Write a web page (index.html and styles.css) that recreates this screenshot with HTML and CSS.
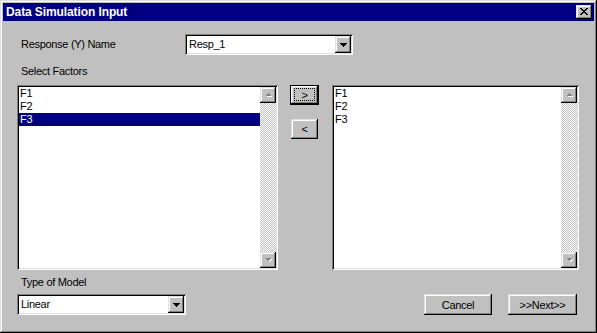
FILE: index.html
```html
<!DOCTYPE html>
<html>
<head>
<meta charset="utf-8">
<title>Data Simulation Input</title>
<link rel="stylesheet" href="styles.css">
</head>
<body>
<div class="window">
  <div class="titlebar">
    <span class="title">Data Simulation Input</span>
    <span class="close-btn"><svg width="8" height="7" viewBox="0 0 8 7" shape-rendering="crispEdges"><path d="M0 0h2v1H0zM6 0h2v1H6zM1 1h2v1H1zM5 1h2v1H5zM2 2h4v1H2zM3 3h2v1H3zM2 4h4v1H2zM1 5h2v1H1zM5 5h2v1H5zM0 6h2v1H0zM6 6h2v1H6z"/></svg></span>
  </div>
  <div class="content">
    <div class="row-response">
      <span class="label resp-label">Response (Y) Name</span>
      <div class="combo resp-combo">
        <span class="combo-text">Resp_1</span>
        <span class="drop-btn"><svg width="7" height="4" viewBox="0 0 7 4" shape-rendering="crispEdges"><path d="M0 0h7v1H0zM1 1h5v1H1zM2 2h3v1H2zM3 3h1v1H3z"/></svg></span>
      </div>
    </div>
    <div class="label section-label">Select Factors</div>
    <div class="lists">
      <div class="listbox left-list">
        <ul class="items"><li>F1</li><li>F2</li><li class="selected">F3</li></ul>
        <div class="vscroll">
          <span class="sbtn"><svg width="7" height="4" viewBox="0 0 7 4" shape-rendering="crispEdges"><path fill="#fff" d="M4 1h1v1H4zM3 2h3v1H3zM2 3h5v1H2z"/><path fill="#808080" d="M3 0h1v1H3zM2 1h3v1H2zM1 2h5v1H1z"/></svg></span>
          <span class="track"></span>
          <span class="sbtn"><svg width="7" height="4" viewBox="0 0 7 4" shape-rendering="crispEdges"><path fill="#fff" d="M2 1h5v1H2zM3 2h3v1H3zM4 3h1v1H4z"/><path fill="#808080" d="M1 0h5v1H1zM2 1h3v1H2zM3 2h1v1H3z"/></svg></span>
        </div>
      </div>
      <div class="move-btns">
        <span class="btn default move"><span class="focus">&gt;</span></span>
        <span class="btn move back">&lt;</span>
      </div>
      <div class="listbox right-list">
        <ul class="items"><li>F1</li><li>F2</li><li>F3</li></ul>
        <div class="vscroll">
          <span class="sbtn"><svg width="7" height="4" viewBox="0 0 7 4" shape-rendering="crispEdges"><path fill="#fff" d="M4 1h1v1H4zM3 2h3v1H3zM2 3h5v1H2z"/><path fill="#808080" d="M3 0h1v1H3zM2 1h3v1H2zM1 2h5v1H1z"/></svg></span>
          <span class="track"></span>
          <span class="sbtn"><svg width="7" height="4" viewBox="0 0 7 4" shape-rendering="crispEdges"><path fill="#fff" d="M2 1h5v1H2zM3 2h3v1H3zM4 3h1v1H4z"/><path fill="#808080" d="M1 0h5v1H1zM2 1h3v1H2zM3 2h1v1H3z"/></svg></span>
        </div>
      </div>
    </div>
    <div class="bottom">
      <div class="model">
        <div class="label model-label">Type of Model</div>
        <div class="combo model-combo">
          <span class="combo-text">Linear</span>
          <span class="drop-btn"><svg width="7" height="4" viewBox="0 0 7 4" shape-rendering="crispEdges"><path d="M0 0h7v1H0zM1 1h5v1H1zM2 2h3v1H2zM3 3h1v1H3z"/></svg></span>
        </div>
      </div>
      <div class="actions">
        <span class="btn action cancel">Cancel</span>
        <span class="btn action next">&gt;&gt;Next&gt;&gt;</span>
      </div>
    </div>
  </div>
</div>
</body>
</html>
```

FILE: styles.css
```css
* { box-sizing: border-box; }
html, body { margin: 0; padding: 0; background: #c0c0c0; }
body {
  font-family: "Liberation Sans", Arial, sans-serif;
  font-size: 11px;
  color: #000;
  letter-spacing: -0.3px;
}
.window {
  width: 597px;
  height: 333px;
  background: #c0c0c0;
  padding: 3px;
  box-shadow: inset -1px -1px #000, inset 1px 1px #dfdfdf, inset -2px -2px #808080, inset 2px 2px #fff;
  display: flex;
  flex-direction: column;
}
.titlebar {
  height: 18px;
  flex: none;
  background: #000080;
  display: flex;
  align-items: center;
  justify-content: space-between;
  padding: 0 2px 0 3px;
}
.title {
  color: #fff;
  font-weight: bold;
  font-size: 12px;
  letter-spacing: -0.1px;
}
.close-btn, .drop-btn, .sbtn, .btn {
  background: #c0c0c0;
  box-shadow: inset -1px -1px #000, inset 1px 1px #dfdfdf, inset -2px -2px #808080, inset 2px 2px #fff;
  display: flex;
  align-items: center;
  justify-content: center;
}
.close-btn {
  width: 16px;
  height: 14px;
  padding: 0 1px 1px 0;
}
.content {
  flex: 1;
  padding: 13px 15px 0 14px;
  display: flex;
  flex-direction: column;
}
.label { line-height: 13px; padding-left: 4px; }
.row-response {
  display: flex;
  align-items: center;
  height: 21px;
}
.resp-label { width: 168px; }
.combo {
  background: #fff;
  box-shadow: inset 1px 1px #808080, inset -1px -1px #fff, inset 2px 2px #000, inset -2px -2px #dfdfdf;
  padding: 2px;
  display: flex;
}
.resp-combo { width: 168px; height: 21px; }
.combo-text { flex: 1; padding-left: 2px; line-height: 17px; }
.drop-btn { width: 16px; padding-top: 1px; }
.section-label { margin-top: 10px; }
.lists {
  margin-top: 7px;
  display: flex;
  height: 185px;
}
.listbox {
  background: #fff;
  box-shadow: inset 1px 1px #808080, inset -1px -1px #fff, inset 2px 2px #000, inset -2px -2px #dfdfdf;
  padding: 2px;
  display: flex;
}
.left-list { width: 261px; }
.right-list { width: 247px; margin-left: 13px; }
.items {
  flex: 1;
  list-style: none;
  margin: 0;
  padding: 0;
}
.items li {
  height: 13px;
  line-height: 13px;
  padding-left: 1px;
}
.items li.selected { background: #000080; color: #fff; }
.vscroll {
  width: 16px;
  display: flex;
  flex-direction: column;
}
.sbtn { height: 16px; flex: none; }
.track {
  flex: 1;
  background: repeating-conic-gradient(#fff 0 25%, #c0c0c0 0 50%) 0 0 / 2px 2px;
}
.move-btns {
  margin-left: 12px;
  width: 29px;
  display: flex;
  flex-direction: column;
  align-items: flex-start;
}
.move { height: 20px; }
.default {
  width: 29px;
  padding: 3px 4px 4px 4px;
  box-shadow: inset 0 0 0 1px #000, inset -2px -2px #000, inset 2px 2px #fff, inset -3px -3px #808080, inset 3px 3px #dfdfdf;
}
.focus {
  flex: 1;
  align-self: stretch;
  border: 1px dotted #000;
  display: flex;
  align-items: center;
  justify-content: center;
}
.back {
  width: 27px;
  margin-top: 14px;
  margin-left: 1px;
}
.bottom {
  margin-top: 6px;
  display: flex;
  justify-content: space-between;
  align-items: flex-end;
}
.model { width: 169px; }
.model-combo { margin-top: 5px; height: 21px; }
.actions {
  display: flex;
  gap: 16px;
  margin-right: 2px;
}
.action { height: 21px; }
.cancel { width: 68px; }
.next { width: 69px; }
```
